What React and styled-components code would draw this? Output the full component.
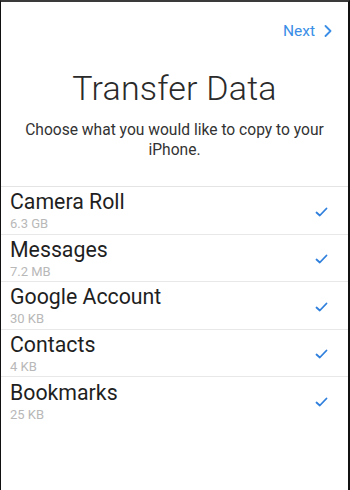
import React from "react";
import styled, { createGlobalStyle } from "styled-components";

const Global = createGlobalStyle`
  html, body { margin: 0; padding: 0; background: #fff; }
  body { font-family: Roboto, "Noto Sans", "Liberation Sans", sans-serif; }
  * { box-sizing: border-box; }
`;

const Frame = styled.div`
  width: 350px;
  height: 490px;
  background: #fff;
  border-top: 2px solid #3a3a3a;
  border-left: 1px solid #111;
  border-right: 2px solid #111;
  display: flex;
  flex-direction: column;
  overflow: hidden;
`;

const TopBar = styled.div`
  display: flex;
  justify-content: flex-end;
  align-items: center;
  height: 44px;
  padding: 14px 16px 0 0;
`;

const NextButton = styled.button`
  display: flex;
  align-items: center;
  gap: 9px;
  border: 0;
  background: none;
  padding: 0;
  font-family: Roboto, "Liberation Sans", sans-serif;
  font-size: 15.5px;
  color: #3a8ee6;
  cursor: pointer;
`;

const Title = styled.h1`
  margin: 22px 0 0;
  text-align: center;
  font-weight: 300;
  font-size: 34px;
  line-height: 40px;
  color: #2a2a2a;
  letter-spacing: 0.2px;
`;

const Subtitle = styled.p`
  margin: 12px 14px 0;
  text-align: center;
  font-size: 15.6px;
  line-height: 20px;
  color: #333;
`;

const List = styled.ul`
  list-style: none;
  margin: 26px 0 0;
  padding: 0;
  border-top: 1px solid #e4e4e4;
`;

const Row = styled.li`
  display: flex;
  align-items: center;
  justify-content: space-between;
  height: 47.5px;
  padding: 1px 20px 0 9px;
  border-bottom: ${(p) => (p.$last ? "none" : "1px solid #e8e8e8")};
`;

const RowText = styled.div`
  display: flex;
  flex-direction: column;
`;

const RowTitle = styled.span`
  font-size: 21.3px;
  line-height: 23px;
  color: #1f1f1f;
`;

const RowSize = styled.span`
  margin-top: 4px;
  font-size: 13px;
  line-height: 14px;
  color: #b8b8b8;
`;

const CheckIcon = styled.svg`
  margin-top: 2px;
`;

const Check = () => (
  <CheckIcon width="13" height="10" viewBox="0 0 13 10">
    <path d="M1.5 5.5 L4.8 8.5 L11.5 1.5" fill="none" stroke="#2f7fdc" strokeWidth="1.8" strokeLinecap="round" strokeLinejoin="round" />
  </CheckIcon>
);

const Chevron = () => (
  <svg width="8" height="12" viewBox="0 0 8 12">
    <path d="M1.5 1 L6.5 6 L1.5 11" fill="none" stroke="#3a8ee6" strokeWidth="1.8" strokeLinecap="round" strokeLinejoin="round" />
  </svg>
);

const items = [
  ["Camera Roll", "6.3 GB"],
  ["Messages", "7.2 MB"],
  ["Google Account", "30 KB"],
  ["Contacts", "4 KB"],
  ["Bookmarks", "25 KB"],
];

export default function App() {
  return (
    <>
      <Global />
      <Frame>
        <TopBar>
          <NextButton>
            Next <Chevron />
          </NextButton>
        </TopBar>
        <Title>Transfer Data</Title>
        <Subtitle>Choose what you would like to copy to your iPhone.</Subtitle>
        <List>
          {items.map(([name, size], i) => (
            <Row key={name} $last={i === items.length - 1}>
              <RowText>
                <RowTitle>{name}</RowTitle>
                <RowSize>{size}</RowSize>
              </RowText>
              <Check />
            </Row>
          ))}
        </List>
      </Frame>
    </>
  );
}
